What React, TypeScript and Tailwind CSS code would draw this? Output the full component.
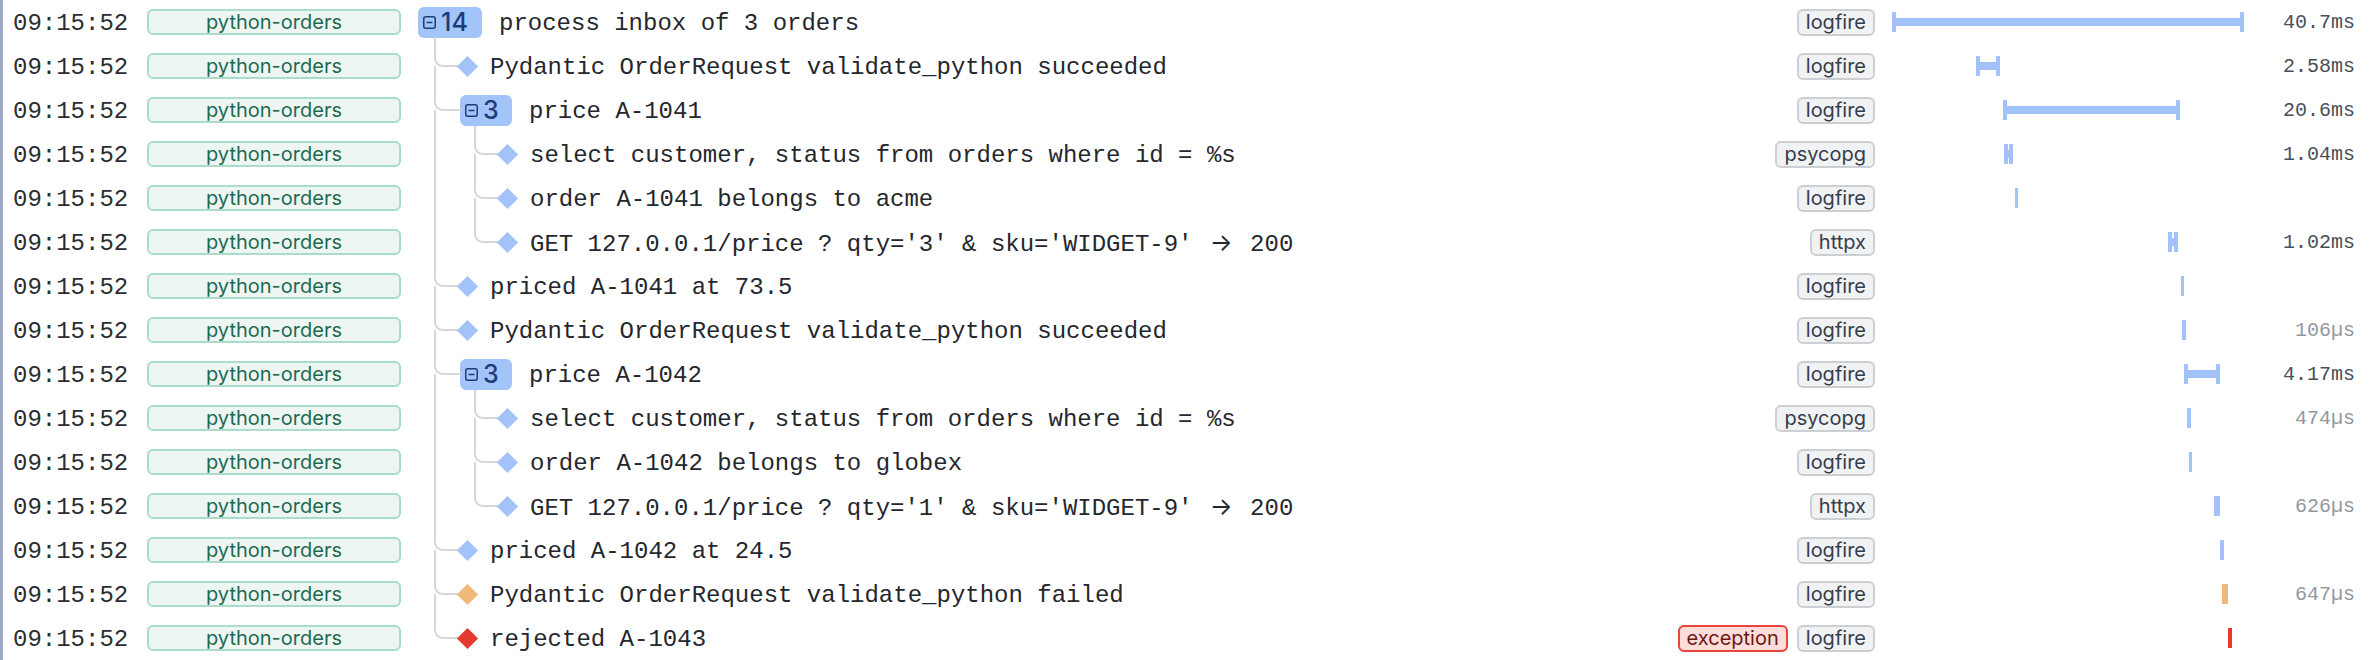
type Row = {
  depth: 0 | 1 | 2;
  kind: 'root' | 'group' | 'leaf';
  text: string;
  count?: number;
  color?: 'blue' | 'orange' | 'red';
  last?: boolean;
  tags: string[];
  exception?: boolean;
  bar: [number, number];
  dur?: string;
  barColor?: 'blue' | 'orange' | 'red';
};

const rows: Row[] = [
  { depth: 0, kind: 'root', count: 14, text: 'process inbox of 3 orders', tags: ['logfire'], bar: [0, 352], dur: '40.7ms' },
  { depth: 1, kind: 'leaf', text: 'Pydantic OrderRequest validate_python succeeded', tags: ['logfire'], bar: [84, 24], dur: '2.58ms' },
  { depth: 1, kind: 'group', count: 3, text: 'price A-1041', tags: ['logfire'], bar: [111, 177], dur: '20.6ms' },
  { depth: 2, kind: 'leaf', text: 'select customer, status from orders where id = %s', tags: ['psycopg'], bar: [112, 9], dur: '1.04ms' },
  { depth: 2, kind: 'leaf', text: 'order A-1041 belongs to acme', tags: ['logfire'], bar: [123, 3] },
  { depth: 2, kind: 'leaf', last: true, text: "GET 127.0.0.1/price ? qty='3' & sku='WIDGET-9' \u2192 200", tags: ['httpx'], bar: [276, 10], dur: '1.02ms' },
  { depth: 1, kind: 'leaf', text: 'priced A-1041 at 73.5', tags: ['logfire'], bar: [289, 3] },
  { depth: 1, kind: 'leaf', text: 'Pydantic OrderRequest validate_python succeeded', tags: ['logfire'], bar: [290, 4], dur: '106µs' },
  { depth: 1, kind: 'group', count: 3, text: 'price A-1042', tags: ['logfire'], bar: [292, 36], dur: '4.17ms' },
  { depth: 2, kind: 'leaf', text: 'select customer, status from orders where id = %s', tags: ['psycopg'], bar: [295, 4], dur: '474µs' },
  { depth: 2, kind: 'leaf', text: 'order A-1042 belongs to globex', tags: ['logfire'], bar: [297, 3] },
  { depth: 2, kind: 'leaf', last: true, text: "GET 127.0.0.1/price ? qty='1' & sku='WIDGET-9' \u2192 200", tags: ['httpx'], bar: [322, 6], dur: '626µs' },
  { depth: 1, kind: 'leaf', text: 'priced A-1042 at 24.5', tags: ['logfire'], bar: [328, 4] },
  { depth: 1, kind: 'leaf', color: 'orange', barColor: 'orange', text: 'Pydantic OrderRequest validate_python failed', tags: ['logfire'], bar: [330, 6], dur: '647µs' },
  { depth: 1, kind: 'leaf', color: 'red', barColor: 'red', last: true, exception: true, text: 'rejected A-1043', tags: ['logfire'], bar: [336, 4] },
];

const mono = "font-['Liberation_Mono','DejaVu_Sans_Mono',monospace]";
const sans = "font-['Inter','Noto_Sans',sans-serif]";

const diamondColor = {
  blue: 'bg-[#a2c2f9]',
  orange: 'bg-[#f0b87b]',
  red: 'bg-[#e5392f]',
};

// the arrow in Liberation Mono is tiny; draw it in Inter, centred in a four-cell gap
const SpanText = ({ text }: { text: string }) => {
  const parts = text.split(' \u2192 ');
  return (
    <span className={`pt-[4px] whitespace-pre text-[24px] text-[#24272d] ${mono}`}>
      {parts[0]}
      {parts.length > 1 && (
        <>
          <span className="inline-block w-[57.6px] text-center font-['Inter',sans-serif]">{'\u2192'}</span>
          {parts[1]}
        </>
      )}
    </span>
  );
};

const MinusSquare = () => (
  <svg width="13" height="13" viewBox="0 0 13 13" fill="none">
    <rect x="0.75" y="0.75" width="11.5" height="11.5" rx="2" stroke="#1d3b7c" strokeWidth="1.5" />
    <line x1="3.5" y1="6.5" x2="9.5" y2="6.5" stroke="#1d3b7c" strokeWidth="1.5" />
  </svg>
);

const CountBadge = ({ count, wide }: { count: number; wide: boolean }) => (
  <div
    className={`${wide ? 'w-[64px]' : 'w-[52px]'} h-[31px] shrink-0 rounded-[6px] bg-[#a3c4f9] flex items-center gap-[5px] pl-[5px] text-[#1d3b7c] text-[25px] font-medium ${sans}`}
  >
    <MinusSquare />
    <span className="leading-none">{count}</span>
  </div>
);

const line = 'absolute w-[2px] bg-[#d6d6db]';

const TreeCell = ({ row }: { row: Row }) => {
  const diamond = diamondColor[row.color ?? 'blue'];
  return (
    <div className="relative h-full flex-1 min-w-0">
      {/* guide lines */}
      {row.kind === 'root' && <div className={`${line} left-[16px] top-[37px] bottom-0`} />}
      {row.depth === 1 && (
        <>
          <div
            className={`absolute left-[16px] top-0 h-[23px] border-l-2 border-b-2 border-[#d6d6db] rounded-bl-[9px] ${
              row.kind === 'group' ? 'w-[27px]' : 'w-[24px]'
            }`}
          />
          {!row.last && <div className={`${line} left-[16px] top-[22px] bottom-0`} />}
        </>
      )}
      {row.kind === 'group' && <div className={`${line} left-[56px] top-[38px] bottom-0`} />}
      {row.depth === 2 && (
        <>
          <div className={`${line} left-[16px] top-0 bottom-0`} />
          <div className="absolute left-[56px] top-0 h-[23px] w-[24px] border-l-2 border-b-2 border-[#d6d6db] rounded-bl-[9px]" />
          {!row.last && <div className={`${line} left-[56px] top-[22px] bottom-0`} />}
        </>
      )}

      <div
        className={`flex h-full items-center ${
          row.depth === 0 ? 'pl-0' : row.depth === 1 ? 'pl-[42px]' : 'pl-[82px]'
        }`}
      >
        {row.kind === 'leaf' ? (
          <>
            <div className={`w-[15px] h-[15px] shrink-0 rotate-45 ${diamond}`} />
            <span className="ml-[15px] flex">
              <SpanText text={row.text} />
            </span>
          </>
        ) : (
          <>
            <CountBadge count={row.count ?? 0} wide={row.kind === 'root'} />
            <span className="ml-[17px] flex">
              <SpanText text={row.text} />
            </span>
          </>
        )}
      </div>
    </div>
  );
};

const barBg = {
  blue: 'bg-[#a2c2f9]',
  orange: 'bg-[#f0b87b]',
  red: 'bg-[#e5392f]',
};

const Bar = ({ left, width, color }: { left: number; width: number; color: 'blue' | 'orange' | 'red' }) => {
  const bg = barBg[color];
  if (width < 8) {
    return <div className={`h-[20px] ${bg}`} style={{ marginLeft: left, width }} />;
  }
  return (
    <div className="flex items-center h-[20px]" style={{ marginLeft: left, width }}>
      <div className={`w-[4px] h-[20px] shrink-0 ${bg}`} />
      <div className={`flex-1 h-[8px] ${bg}`} />
      <div className={`w-[4px] h-[20px] shrink-0 ${bg}`} />
    </div>
  );
};

const Tag = ({ label }: { label: string }) => (
  <span
    className={`h-[27px] px-[7px] flex items-center rounded-[6px] border-2 border-[#cdcfd3] bg-[#f1f2f4] text-[20px] text-[#363d4b] ${sans}`}
  >
    {label}
  </span>
);

export default function App() {
  return (
    <div className="w-[2370px] h-[660px] bg-white border-l-[3px] border-[#9eabc8]">
      {rows.map((row, i) => (
        <div key={i} className="flex h-[44px] items-center">
          <span className={`pl-[10px] pt-[4px] w-[125px] shrink-0 text-[24px] text-[#2a2d33] ${mono}`}>09:15:52</span>
          <div
            className={`ml-[19px] w-[254px] h-[26px] shrink-0 flex items-center justify-center rounded-[6px] border-2 border-[#a9dcc9] bg-[#eef6f3] text-[20px] text-[#1c6b50] ${sans}`}
          >
            python-orders
          </div>
          <div className="ml-[17px] flex-1 h-full flex">
            <TreeCell row={row} />
          </div>
          <div className="flex items-center gap-[9px] shrink-0">
            {row.exception && (
              <span
                className={`h-[27px] px-[7px] flex items-center rounded-[6px] border-2 border-[#e5453a] bg-[#fddcd9] text-[20px] text-[#6b1616] ${sans}`}
              >
                exception
              </span>
            )}
            {row.tags.map((t) => (
              <Tag key={t} label={t} />
            ))}
          </div>
          <div className="ml-[17px] w-[360px] h-full shrink-0 flex items-center">
            <Bar left={row.bar[0]} width={row.bar[1]} color={row.barColor ?? 'blue'} />
          </div>
          <span
            className={`w-[103px] pt-[2px] shrink-0 text-right text-[20px] ${mono} ${
              row.dur?.endsWith('µs') ? 'text-[#94989f]' : 'text-[#4a4f57]'
            }`}
          >
            {row.dur}
          </span>
          <div className="w-[15px] shrink-0" />
        </div>
      ))}
    </div>
  );
}
